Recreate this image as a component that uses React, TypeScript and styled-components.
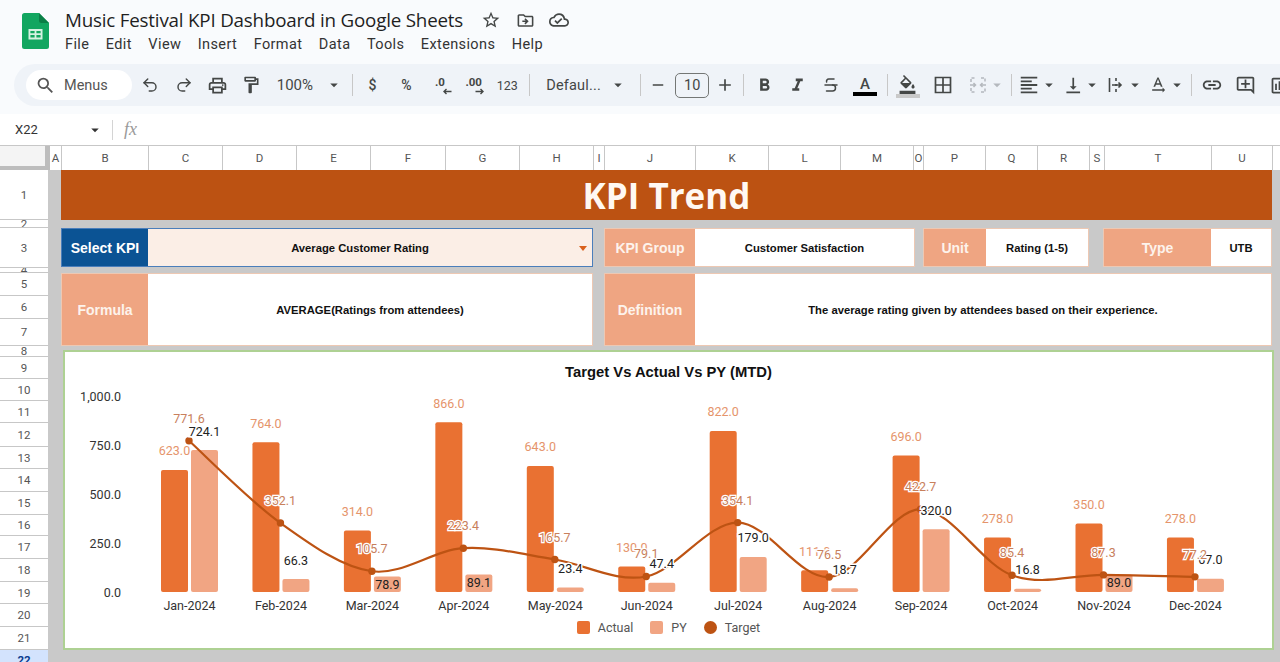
import React from "react";
import styled, { createGlobalStyle } from "styled-components";
import { Redo2, Strikethrough, Undo2 } from "lucide-react";
import {
  MdAdd,
  MdArrowDropDown,
  MdFormatAlignLeft,
  MdFormatBold,
  MdFormatItalic,
  MdLink,
  MdOutlineAddComment,
  MdOutlineCloudDone,
  MdOutlineDriveFileMove,
  MdOutlineFormatColorFill,
  MdOutlineFormatPaint,
  MdOutlineInsertChart,
  MdOutlinePrint,
  MdRemove,
  MdSearch,
  MdStarBorder,
  MdTextRotationNone,
  MdVerticalAlignBottom
} from "react-icons/md";

const MENUS = ["File", "Edit", "View", "Insert", "Format", "Data", "Tools", "Extensions", "Help"];

const COLUMNS: [string, number][] = [
  ["A", 12], ["B", 87], ["C", 74], ["D", 74], ["E", 74], ["F", 75], ["G", 74], ["H", 74],
  ["I", 11], ["J", 91], ["K", 73], ["L", 72], ["M", 73], ["O", 10], ["P", 62], ["Q", 52],
  ["R", 52], ["S", 15], ["T", 107], ["U", 61], ["", 8]
];

const ROWS: [string, number][] = [
  ["1", 50], ["2", 8], ["3", 40], ["4", 5], ["5", 23], ["6", 23], ["7", 27], ["8", 11],
  ["9", 22], ["10", 22], ["11", 22], ["12", 24], ["13", 22], ["14", 23], ["15", 23], ["16", 21],
  ["17", 23], ["18", 23], ["19", 22], ["20", 23], ["21", 23]
];

const CHART = [
  { month: "Jan-2024", actual: 623, py: 724.1, target: 771.6 },
  { month: "Feb-2024", actual: 764, py: 66.3, target: 352.1 },
  { month: "Mar-2024", actual: 314, py: 78.9, target: 105.7, inside: true },
  { month: "Apr-2024", actual: 866, py: 89.1, target: 223.4, inside: true },
  { month: "May-2024", actual: 643, py: 23.4, target: 165.7 },
  { month: "Jun-2024", actual: 130, py: 47.4, target: 79.1 },
  { month: "Jul-2024", actual: 822, py: 179, target: 354.1 },
  { month: "Aug-2024", actual: 111, py: 18.7, target: 76.5 },
  { month: "Sep-2024", actual: 696, py: 320, target: 422.7 },
  { month: "Oct-2024", actual: 278, py: 16.8, target: 85.4 },
  { month: "Nov-2024", actual: 350, py: 89, target: 87.3, inside: true },
  { month: "Dec-2024", actual: 278, py: 67, target: 77.2 }
];

const BASE_Y = 592;
const STEP = 91.45;
const valueY = (v: number) => BASE_Y - v * 0.196;
const centerX = (i: number) => 189 + i * STEP;

const linePath = () => {
  const pts = CHART.map((d, i) => [centerX(i), valueY(d.target)]);
  let path = `M${pts[0][0]} ${pts[0][1]}`;
  for (let i = 0; i < pts.length - 1; i++) {
    const p0 = pts[Math.max(i - 1, 0)];
    const p1 = pts[i];
    const p2 = pts[i + 1];
    const p3 = pts[Math.min(i + 2, pts.length - 1)];
    const c1x = p1[0] + (p2[0] - p0[0]) / 6;
    const c1y = p1[1] + (p2[1] - p0[1]) / 6;
    const c2x = p2[0] - (p3[0] - p1[0]) / 6;
    const c2y = p2[1] - (p3[1] - p1[1]) / 6;
    path += ` C${c1x} ${c1y} ${c2x} ${c2y} ${p2[0]} ${p2[1]}`;
  }
  return path;
};

const SheetsLogo = () => (
  <svg width="27" height="36" viewBox="0 0 27 36">
    <path d="M2.5 0H17l10 10v23.5a2.5 2.5 0 0 1-2.5 2.5h-22A2.5 2.5 0 0 1 0 33.5v-31A2.5 2.5 0 0 1 2.5 0z" fill="#12a660" />
    <path d="M17 0l10 10h-7.5A2.5 2.5 0 0 1 17 7.5z" fill="#0b7f47" />
    <path d="M6.5 16h14v10.5h-14z M8.4 17.9v2.4h4.2v-2.4z M14.4 17.9v2.4h4.2v-2.4z M8.4 22.1v2.5h4.2v-2.5z M14.4 22.1v2.5h4.2v-2.5z" fill="#d6f2e2" fillRule="evenodd" />
  </svg>
);

const MergeIcon = () => (
  <svg width="20" height="20" viewBox="0 0 20 20" fill="none" stroke="#b4b8bd" strokeWidth="1.5">
    <path d="M3 7V3h4M13 3h4v4M3 13v4h4M13 17h4v-4" strokeDasharray="3 1.5" />
    <path d="M2 10h5M5.5 8l2 2-2 2M18 10h-5M14.5 8l-2 2 2 2" />
  </svg>
);

const WrapIcon = () => (
  <svg width="20" height="20" viewBox="0 0 20 20" fill="none" stroke="#444746" strokeWidth="1.6">
    <path d="M3.5 3v14M10 3v3M10 9v2M10 14v3M6 10h9M12.5 7.5L15 10l-2.5 2.5" />
  </svg>
);

const BordersIcon = () => (
  <svg width="18" height="18" viewBox="0 0 18 18" fill="none" stroke="#444746" strokeWidth="1.7">
    <path d="M1.5 1.5h15v15h-15zM9 1.5v15M1.5 9h15" />
  </svg>
);

const DecimalArrow = ({ flip }: { flip?: boolean }) => (
  <svg width="9" height="7" viewBox="0 0 9 7" fill="none" stroke="#444746" strokeWidth="1.4" style={flip ? { transform: "scaleX(-1)" } : undefined}>
    <path d="M0.5 3.5H8M5.5 1L8 3.5 5.5 6" />
  </svg>
);

const Caret = () => (
  <CaretBox>
    <MdArrowDropDown size={18} />
  </CaretBox>
);

export default function App() {
  return (
    <Page>
      <GlobalStyle />
      <Header>
        <LogoBox>
          <SheetsLogo />
        </LogoBox>
        <TitleBlock>
          <TitleRow>
            <DocTitle>Music Festival KPI Dashboard in Google Sheets</DocTitle>
            <TitleIcons>
              <MdStarBorder size={20} />
              <MdOutlineDriveFileMove size={19} />
              <MdOutlineCloudDone size={20} />
            </TitleIcons>
          </TitleRow>
          <MenuRow>
            {MENUS.map(m => (
              <MenuItem key={m}>{m}</MenuItem>
            ))}
          </MenuRow>
        </TitleBlock>
      </Header>

      <Toolbar>
        <SearchPill>
          <MdSearch size={21} />
          <span>Menus</span>
        </SearchPill>
        <ToolButton><Undo2 size={18} strokeWidth={1.9} /></ToolButton>
        <ToolButton><Redo2 size={18} strokeWidth={1.9} /></ToolButton>
        <ToolButton><MdOutlinePrint size={21} /></ToolButton>
        <ToolButton><MdOutlineFormatPaint size={20} /></ToolButton>
        <ZoomSelect>
          <span>100%</span>
          <Caret />
        </ZoomSelect>
        <Divider />
        <ToolButton><ToolText>$</ToolText></ToolButton>
        <ToolButton><ToolText>%</ToolText></ToolButton>
        <ToolButton>
          <DecimalText>
            .0
            <ArrowSlot $right={-7}><DecimalArrow flip /></ArrowSlot>
          </DecimalText>
        </ToolButton>
        <ToolButton>
          <DecimalText>
            .00
            <ArrowSlot $right={-2}><DecimalArrow /></ArrowSlot>
          </DecimalText>
        </ToolButton>
        <ToolButton><NumberText>123</NumberText></ToolButton>
        <Divider $extra={2} />
        <FontSelect>
          <span>Defaul...</span>
          <Caret />
        </FontSelect>
        <Divider />
        <ToolButton $w={28}><MdRemove size={18} /></ToolButton>
        <SizeBox>10</SizeBox>
        <ToolButton $w={31}><MdAdd size={20} /></ToolButton>
        <Divider />
        <ToolButton><MdFormatBold size={21} /></ToolButton>
        <ToolButton><MdFormatItalic size={21} /></ToolButton>
        <ToolButton><Strikethrough size={18} strokeWidth={2} /></ToolButton>
        <ToolButton>
          <ColorStack>
            <ColorLetter>A</ColorLetter>
            <ColorBar $color="#000000" />
          </ColorStack>
        </ToolButton>
        <Divider $extra={2} />
        <ToolButton>
          <ColorStack>
            <MdOutlineFormatColorFill size={19} />
            <ColorBar $color="#c9c9c9" />
          </ColorStack>
        </ToolButton>
        <ToolButton $w={35.7}><BordersSlot><BordersIcon /></BordersSlot></ToolButton>
        <SplitTool $w={48} $pad={8} $muted>
          <MergeIcon />
          <Caret />
        </SplitTool>
        <Divider />
        <SplitTool $w={43} $pad={3}>
          <MdFormatAlignLeft size={22} />
          <Caret />
        </SplitTool>
        <SplitTool $w={43} $pad={4.5}>
          <MdVerticalAlignBottom size={21} />
          <Caret />
        </SplitTool>
        <SplitTool $w={44} $pad={5}>
          <WrapIcon />
          <Caret />
        </SplitTool>
        <SplitTool $w={43} $pad={3}>
          <MdTextRotationNone size={20} />
          <Caret />
        </SplitTool>
        <Divider />
        <ToolButton><MdLink size={22} /></ToolButton>
        <ToolButton><MdOutlineAddComment size={21} /></ToolButton>
        <ToolButton><MdOutlineInsertChart size={21} /></ToolButton>
      </Toolbar>

      <FormulaBar>
        <NameBox>
          <span>X22</span>
          <MdArrowDropDown size={18} />
        </NameBox>
        <FormulaSep />
        <FxMark>fx</FxMark>
      </FormulaBar>

      <ColumnHeader>
        <Corner />
        {COLUMNS.map(([name, width], i) => (
          <ColumnCell key={i} $w={width}>
            {name}
          </ColumnCell>
        ))}
      </ColumnHeader>

      <SheetBody>
        <RowHeader>
          {ROWS.map(([name, height]) => (
            <RowCell key={name} $h={height}>
              {name}
            </RowCell>
          ))}
          <ActiveRowCell>22</ActiveRowCell>
        </RowHeader>

        <SheetArea>
          <Banner>KPI Trend</Banner>

          <InfoRow>
            <SelectField>
              <SelectLabel>Select KPI</SelectLabel>
              <SelectValue>
                Average Customer Rating
                <DropMark />
              </SelectValue>
            </SelectField>
            <Field $w={311}>
              <FieldLabel $w={91}>KPI Group</FieldLabel>
              <FieldValue>Customer Satisfaction</FieldValue>
            </Field>
            <Field $w={166} $left={8}>
              <FieldLabel $w={63}>Unit</FieldLabel>
              <FieldValue>Rating (1-5)</FieldValue>
            </Field>
            <Field $w={169} $left={14}>
              <FieldLabel $w={108}>Type</FieldLabel>
              <FieldValue>UTB</FieldValue>
            </Field>
          </InfoRow>

          <TallRow>
            <Field $w={532}>
              <FieldLabel $w={87}>Formula</FieldLabel>
              <FieldValue>AVERAGE(Ratings from attendees)</FieldValue>
            </Field>
            <Field $w={668}>
              <FieldLabel $w={91}>Definition</FieldLabel>
              <FieldValue>The average rating given by attendees based on their experience.</FieldValue>
            </Field>
          </TallRow>

          <ChartCard>
            <ChartTitle>Target Vs Actual Vs PY (MTD)</ChartTitle>
            <svg width="1207" height="235" viewBox="65 385 1207 235">
              {[0, 250, 500, 750, 1000].map(v => (
                <AxisText key={v} x={121} y={valueY(v) + 4.5} textAnchor="end">
                  {v === 1000 ? "1,000.0" : v.toFixed(1)}
                </AxisText>
              ))}

              {CHART.map((d, i) => (
                <g key={d.month}>
                  <rect x={centerX(i) - 28} y={valueY(d.actual)} width={27} height={d.actual * 0.196} rx={2} fill="#e97132" />
                  <rect x={centerX(i) + 2} y={valueY(d.py)} width={27} height={d.py * 0.196} rx={2} fill="#f1a583" />
                  <AxisText x={centerX(i) + 0.5} y={609.5} textAnchor="middle">
                    {d.month}
                  </AxisText>
                </g>
              ))}

              <path d={linePath()} fill="none" stroke="#bd5313" strokeWidth={2.2} />
              {CHART.map((d, i) => (
                <circle key={d.month} cx={centerX(i)} cy={valueY(d.target)} r={3.7} fill="#bd5313" />
              ))}

              {CHART.map((d, i) => (
                <ActualLabel key={d.month} x={centerX(i) - 14.5} y={valueY(d.actual) - 14.5} textAnchor="middle">
                  {d.actual.toFixed(1)}
                </ActualLabel>
              ))}
              {CHART.map((d, i) => (
                <PyLabel
                  key={d.month}
                  $halo={!d.inside}
                  x={centerX(i) + 15.5}
                  y={d.inside ? valueY(d.py) + 12 : valueY(d.py) - 14.5}
                  textAnchor="middle"
                >
                  {d.py.toFixed(1)}
                </PyLabel>
              ))}
              {CHART.map((d, i) => (
                <TargetLabel key={d.month} x={centerX(i)} y={valueY(d.target) - 18} textAnchor="middle">
                  {d.target.toFixed(1)}
                </TargetLabel>
              ))}
            </svg>
            <Legend>
              <LegendItem>
                <LegendSwatch $color="#e97132" />
                Actual
              </LegendItem>
              <LegendItem>
                <LegendSwatch $color="#f1a583" />
                PY
              </LegendItem>
              <LegendItem>
                <LegendSwatch $color="#bd5313" $round />
                Target
              </LegendItem>
            </Legend>
          </ChartCard>
        </SheetArea>
      </SheetBody>
    </Page>
  );
}

const GlobalStyle = createGlobalStyle`
  html, body {
    margin: 0;
    padding: 0;
    overflow: hidden;
    background: #f9fbfd;
  }
  * {
    box-sizing: border-box;
  }
`;

const Page = styled.div`
  width: 1280px;
  height: 662px;
  overflow: hidden;
  display: flex;
  flex-direction: column;
  background: #f9fbfd;
  font-family: Roboto, "Liberation Sans", sans-serif;
  color: #1f1f1f;
`;

const Header = styled.header`
  height: 64px;
  flex: none;
  display: flex;
  padding: 13px 0 0 22px;
`;

const LogoBox = styled.div`
  width: 43px;
  flex: none;
`;

const TitleBlock = styled.div`
  display: flex;
  flex-direction: column;
`;

const TitleRow = styled.div`
  display: flex;
  align-items: center;
  height: 14px;
`;

const DocTitle = styled.h1`
  margin: 0;
  font-family: "Open Sans", Roboto, sans-serif;
  font-size: 18.8px;
  font-weight: 400;
  letter-spacing: -0.2px;
  white-space: nowrap;
`;

const TitleIcons = styled.div`
  display: flex;
  align-items: center;
  gap: 14.5px;
  margin-left: 18px;
  color: #444746;
`;

const MenuRow = styled.nav`
  display: flex;
  gap: 16.5px;
  margin-top: 9px;
`;

const MenuItem = styled.span`
  font-size: 14.5px;
  letter-spacing: 0.38px;
  color: #333;
`;

const Toolbar = styled.div`
  flex: none;
  height: 42px;
  margin-left: 14px;
  width: 1300px;
  padding-left: 12px;
  display: flex;
  align-items: center;
  border-radius: 21px 0 0 21px;
  background: #eff3f8;
  color: #444746;
`;

const SearchPill = styled.div`
  width: 106px;
  height: 30px;
  flex: none;
  display: flex;
  align-items: center;
  gap: 8px;
  padding-left: 9px;
  margin-right: 1px;
  border-radius: 15px;
  background: #ffffff;
  font-size: 14.5px;
  color: #555;
`;

const ToolButton = styled.div<{ $w?: number }>`
  width: ${p => p.$w ?? 33.7}px;
  height: 30px;
  flex: none;
  display: flex;
  align-items: center;
  justify-content: center;
`;

const BordersSlot = styled.span`
  display: flex;
  margin-left: 2px;
`;

const ToolText = styled.span`
  font-size: 14px;
  font-weight: 500;
`;

const NumberText = styled.span`
  font-size: 12.5px;
`;

const DecimalText = styled.span`
  position: relative;
  top: -3px;
  font-size: 11.5px;
  font-weight: 700;
`;

const ArrowSlot = styled.span<{ $right: number }>`
  position: absolute;
  right: ${p => p.$right}px;
  top: 13px;
  display: flex;
`;

const CaretBox = styled.span`
  display: flex;
  align-items: center;
  justify-content: center;
  width: 18px;
  flex: none;
`;

const ZoomSelect = styled.div`
  width: 80px;
  flex: none;
  margin-left: 1px;
  padding: 0 6px 0 8px;
  display: flex;
  align-items: center;
  justify-content: space-between;
  font-size: 15px;
`;

const FontSelect = styled.div`
  width: 104px;
  flex: none;
  padding: 0 10px 0 13px;
  display: flex;
  align-items: center;
  justify-content: space-between;
  font-size: 14.5px;
  letter-spacing: 0.2px;
`;

const Divider = styled.div<{ $extra?: number }>`
  width: 1px;
  height: 22px;
  flex: none;
  margin: 0 3px 0 ${p => 3 + (p.$extra ?? 0)}px;
  background: #c7c7c7;
`;

const SizeBox = styled.div`
  width: 34px;
  height: 25px;
  flex: none;
  margin-left: 3px;
  display: flex;
  align-items: center;
  justify-content: center;
  border: 1px solid #747775;
  border-radius: 5px;
  font-size: 14.5px;
`;

const ColorStack = styled.div`
  display: flex;
  flex-direction: column;
  align-items: center;
  margin-top: 2px;
`;

const ColorLetter = styled.span`
  font-size: 15px;
  line-height: 16px;
  font-weight: 500;
`;

const ColorBar = styled.span<{ $color: string }>`
  width: 24px;
  height: 4px;
  background: ${p => p.$color};
`;

const SplitTool = styled.div<{ $w: number; $pad: number; $muted?: boolean }>`
  width: ${p => p.$w}px;
  padding-left: ${p => p.$pad}px;
  flex: none;
  display: flex;
  align-items: center;
  color: ${p => (p.$muted ? "#b4b8bd" : "#444746")};
`;

const FormulaBar = styled.div`
  flex: none;
  height: 31px;
  margin-top: 8px;
  background: #ffffff;
  display: flex;
  align-items: center;
`;

const NameBox = styled.div`
  width: 112px;
  flex: none;
  padding: 0 8px 0 15px;
  display: flex;
  align-items: center;
  justify-content: space-between;
  font-size: 13px;
  color: #333;
`;

const FormulaSep = styled.div`
  width: 1px;
  height: 20px;
  background: #d4d4d4;
`;

const FxMark = styled.span`
  margin-left: 11px;
  font-family: "Liberation Serif", serif;
  font-style: italic;
  font-size: 18px;
  color: #9a9a9a;
`;

const ColumnHeader = styled.div`
  flex: none;
  height: 25px;
  display: flex;
  background: #ffffff;
  border-top: 1px solid #c7c7c7;
`;

const Corner = styled.div`
  width: 50px;
  flex: none;
  background: #f4f4f4;
  border-right: 5px solid #bdbdbd;
  border-bottom: 4px solid #bdbdbd;
`;

const ColumnCell = styled.div<{ $w: number }>`
  width: ${p => p.$w}px;
  flex: none;
  display: flex;
  align-items: center;
  justify-content: center;
  border-right: 1px solid #c7c7c7;
  font-size: 11.5px;
  color: #555;
`;

const SheetBody = styled.div`
  flex: 1;
  min-height: 0;
  display: flex;
  background: #c9c9c9;
`;

const RowHeader = styled.div`
  width: 48px;
  flex: none;
  background: #ffffff;
`;

const RowCell = styled.div<{ $h: number }>`
  height: ${p => p.$h}px;
  overflow: hidden;
  display: flex;
  align-items: center;
  justify-content: center;
  border-bottom: 1px solid #c7c7c7;
  font-size: 11.5px;
  color: #555;
`;

const ActiveRowCell = styled.div`
  height: 22px;
  padding-top: 3px;
  text-align: center;
  background: #d3e3fd;
  font-size: 11.5px;
  font-weight: 700;
  color: #0b3d91;
`;

const SheetArea = styled.div`
  flex: 1;
  min-width: 0;
  padding-left: 13px;
`;

const Banner = styled.div`
  width: 1211px;
  height: 50px;
  display: flex;
  align-items: center;
  justify-content: center;
  background: #bc5212;
  font-family: "Open Sans", sans-serif;
  font-size: 35px;
  font-weight: 700;
  color: #fff8f2;
`;

const InfoRow = styled.div`
  display: flex;
  height: 39px;
  margin-top: 8px;
`;

const TallRow = styled.div`
  display: flex;
  gap: 11px;
  height: 73px;
  margin-top: 6px;
`;

const SelectField = styled.div`
  width: 532px;
  margin-right: 11px;
  flex: none;
  display: flex;
  border: 1px solid #4a7ebb;
`;

const SelectLabel = styled.div`
  width: 86px;
  flex: none;
  display: flex;
  align-items: center;
  justify-content: center;
  background: #0b5394;
  font-family: "Liberation Sans", sans-serif;
  font-size: 14px;
  font-weight: 700;
  color: #ffffff;
`;

const SelectValue = styled.div`
  position: relative;
  flex: 1;
  padding-right: 20px;
  display: flex;
  align-items: center;
  justify-content: center;
  background: #fbeee6;
  font-family: "Liberation Sans", sans-serif;
  font-size: 11.25px;
  font-weight: 700;
  color: #111;
`;

const DropMark = styled.span`
  position: absolute;
  right: 5px;
  top: 17px;
  border-left: 4px solid transparent;
  border-right: 4px solid transparent;
  border-top: 5px solid #d9601c;
`;

const Field = styled.div<{ $w: number; $left?: number }>`
  width: ${p => p.$w}px;
  margin-left: ${p => p.$left ?? 0}px;
  flex: none;
  display: flex;
  border: 1px solid #edc8b3;
`;

const FieldLabel = styled.div<{ $w: number }>`
  width: ${p => p.$w - 1}px;
  flex: none;
  display: flex;
  align-items: center;
  justify-content: center;
  background: #efa582;
  font-family: "Liberation Sans", sans-serif;
  font-size: 14px;
  font-weight: 700;
  color: #fdf3ec;
`;

const FieldValue = styled.div`
  flex: 1;
  display: flex;
  align-items: center;
  justify-content: center;
  background: #ffffff;
  font-family: "Liberation Sans", sans-serif;
  font-size: 11.25px;
  font-weight: 700;
  color: #111;
`;

const ChartCard = styled.section`
  width: 1211px;
  height: 300px;
  margin: 4px 0 0 2px;
  display: flex;
  flex-direction: column;
  background: #ffffff;
  border: 2px solid #aed193;
`;

const ChartTitle = styled.h2`
  height: 33px;
  flex: none;
  margin: 0;
  padding-top: 12px;
  text-align: center;
  font-family: "Liberation Sans", sans-serif;
  font-size: 14.8px;
  line-height: 16px;
  font-weight: 700;
  color: #111;
`;

const AxisText = styled.text`
  font-family: Roboto, sans-serif;
  font-size: 12.5px;
  fill: #333333;
`;

const ActualLabel = styled.text`
  font-family: Roboto, sans-serif;
  font-size: 12.5px;
  fill: #e5946b;
`;

const PyLabel = styled.text<{ $halo?: boolean }>`
  font-family: Roboto, sans-serif;
  font-size: 12.5px;
  fill: #222222;
  paint-order: stroke;
  stroke: ${p => (p.$halo ? "#ffffff" : "none")};
  stroke-width: 3px;
`;

const TargetLabel = styled.text`
  font-family: Roboto, sans-serif;
  font-size: 12.5px;
  fill: #c8805c;
  paint-order: stroke;
  stroke: #ffffff;
  stroke-width: 2.5px;
`;

const Legend = styled.div`
  flex: 1;
  display: flex;
  justify-content: center;
  align-items: flex-start;
  gap: 17px;
  font-size: 12.5px;
  color: #555;
`;

const LegendItem = styled.div`
  display: flex;
  align-items: center;
  gap: 8px;
  height: 14px;
`;

const LegendSwatch = styled.span<{ $color: string; $round?: boolean }>`
  width: 13px;
  height: 13px;
  border-radius: ${p => (p.$round ? "50%" : "2px")};
  background: ${p => p.$color};
`;
